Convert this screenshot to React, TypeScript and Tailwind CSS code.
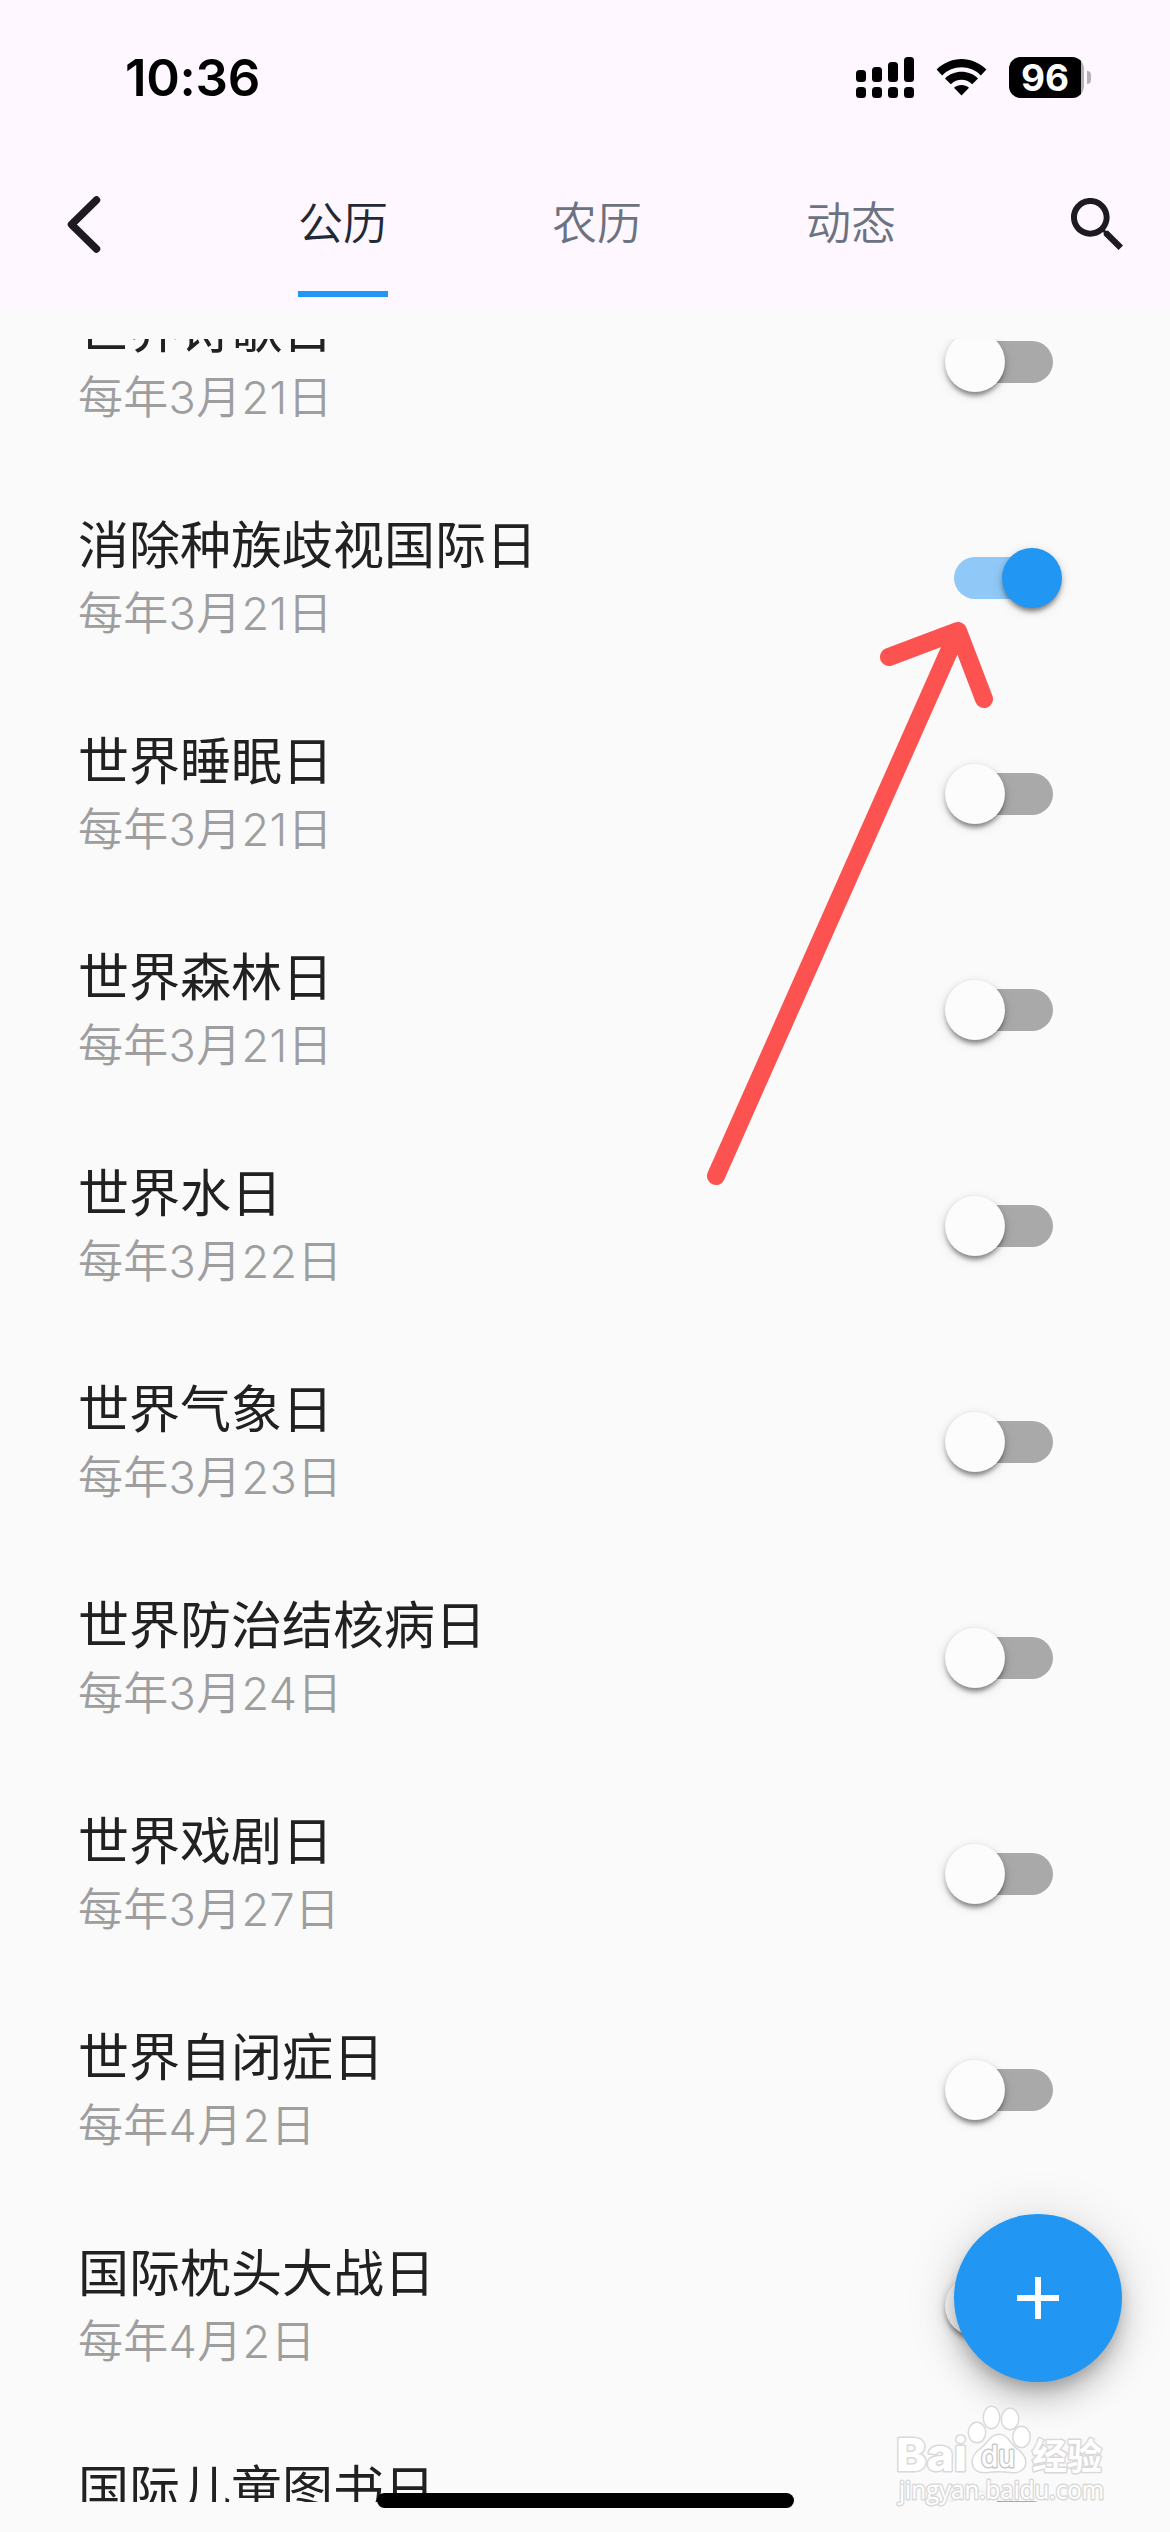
import { useState } from "react";

const HOLIDAYS = [
  { name: "世界诗歌日", date: "每年3月21日", enabled: false },
  { name: "消除种族歧视国际日", date: "每年3月21日", enabled: true },
  { name: "世界睡眠日", date: "每年3月21日", enabled: false },
  { name: "世界森林日", date: "每年3月21日", enabled: false },
  { name: "世界水日", date: "每年3月22日", enabled: false },
  { name: "世界气象日", date: "每年3月23日", enabled: false },
  { name: "世界防治结核病日", date: "每年3月24日", enabled: false },
  { name: "世界戏剧日", date: "每年3月27日", enabled: false },
  { name: "世界自闭症日", date: "每年4月2日", enabled: false },
  { name: "国际枕头大战日", date: "每年4月2日", enabled: false },
  { name: "国际儿童图书日", date: "每年4月2日", enabled: false },
];

const TABS = ["公历", "农历", "动态"];

function StatusBar() {
  return (
    <div className="flex h-[156px] items-start justify-between pt-[57px] pr-[79px] pl-[125px]">
      <span className="text-[51px] leading-[42px] font-semibold tracking-[-0.3px] text-black">10:36</span>
      <div className="flex items-start">
        <svg width="58" height="42" viewBox="0 0 58 42">
          <rect x="0" y="13" width="10" height="12" rx="3.5" />
          <rect x="16" y="10" width="10" height="15" rx="3.5" />
          <rect x="32" y="5" width="10" height="20" rx="3.5" />
          <rect x="48" y="0" width="10" height="25" rx="3.5" />
          <rect x="0" y="30" width="10" height="11" rx="3.5" />
          <rect x="16" y="30" width="10" height="11" rx="3.5" />
          <rect x="32" y="30" width="10" height="11" rx="3.5" />
          <rect x="48" y="30" width="10" height="11" rx="3.5" />
        </svg>
        <svg className="mt-0.5 ml-[22px]" width="51" height="37" viewBox="0 0 51 37">
          <path d="M0.600 10.600C14.500-3.500 36.500-3.500 50.400 10.600L44.800 16.400C34.500 5.600 16.500 5.600 6.200 16.400Z" />
          <path d="M9 19.400C18 10.600 33 10.600 42 19.400L36.200 25.200C30 19.400 21 19.400 14.800 25.200Z" />
          <path d="M18 28.800C22.300 25 28.700 25 33 28.800L25.500 36.600Z" />
        </svg>
        <div className="ml-[22px] flex h-[41px] w-[75px] overflow-hidden rounded-[12px] bg-[#b5b0b8]">
          <div className="flex h-full w-[72px] items-center justify-center bg-black text-[37px] leading-[41px] font-bold text-white">
            96
          </div>
        </div>
        <div className="mt-[14px] ml-[3px] h-[13px] w-1 rounded-r-full bg-[#b5b0b8]" />
      </div>
    </div>
  );
}

function Switch({ on, onToggle }: { on: boolean; onToggle: () => void }) {
  return (
    <button
      role="switch"
      aria-checked={on}
      onClick={onToggle}
      className={`flex h-[42px] w-[99px] items-center rounded-full ${
        on ? "justify-end bg-[#90c9f7]" : "justify-start bg-[#a9a9a9]"
      }`}
    >
      <span
        className={`h-[60px] w-[60px] shrink-0 rounded-full shadow-[0_6px_5px_-3px_rgba(0,0,0,0.3),0_3px_5px_rgba(0,0,0,0.2),0_3px_12px_rgba(0,0,0,0.14)] ${
          on ? "-mr-[9px] bg-[#2196f3]" : "-ml-[9px] bg-[#fcfcfc]"
        }`}
      />
    </button>
  );
}

function Watermark() {
  return (
    <svg className="absolute top-[2395px] left-[890px]" width="220" height="120" viewBox="0 0 220 120">
      <g fill="#fff" stroke="#d9d9d9" strokeWidth="3" paintOrder="stroke" strokeLinejoin="round">
        <ellipse cx="87" cy="37.500" rx="8" ry="9.500" />
        <ellipse cx="101.500" cy="22.500" rx="7.500" ry="10.500" />
        <ellipse cx="120" cy="24" rx="8" ry="10" />
        <ellipse cx="131.500" cy="42" rx="8" ry="10" />
        <path d="M109 40C117 40 119 48 126 54C140 63 137 78 122 77Q109 75 96 77C80 78 79 62 91 54C98 49 101 40 109 40Z" />
        <text x="6" y="76" fontSize="45" fontWeight="800" textLength="71" lengthAdjust="spacingAndGlyphs">Bai</text>
        <text x="91" y="72" fontSize="30" fontWeight="500" stroke="#c9c9c9" textLength="34" lengthAdjust="spacingAndGlyphs">du</text>
        <text x="142" y="75" fontSize="36" fontWeight="700" textLength="70" lengthAdjust="spacingAndGlyphs">经验</text>
        <text x="9" y="104" fontSize="26" fontFamily="Open Sans, sans-serif" textLength="205" lengthAdjust="spacingAndGlyphs">jingyan.baidu.com</text>
      </g>
    </svg>
  );
}

export default function App() {
  const [tab, setTab] = useState(0);
  const [items, setItems] = useState(HOLIDAYS);

  const toggle = (index: number) =>
    setItems(items.map((item, i) => (i === index ? { ...item, enabled: !item.enabled } : item)));

  return (
    <div className="relative flex h-[2532px] w-[1170px] flex-col overflow-hidden bg-[#fafafa] font-['Inter','Noto_Sans_CJK_SC',sans-serif]">
      <header className="h-[309px] shrink-0 bg-[#fef7ff]">
        <StatusBar />
        <nav className="flex h-[141px] items-start pr-[47px] pl-[67px]">
          <button aria-label="返回" className="mt-10">
            <svg width="34" height="57" viewBox="0 0 34 57" fill="none" stroke="#1d1b20" strokeWidth="7.500" strokeLinecap="round" strokeLinejoin="round">
              <path d="M29.500 4L4.500 28.500L29.500 53" />
            </svg>
          </button>
          <div className="ml-[197px] flex flex-1 gap-[164px]">
            {TABS.map((label, i) => (
              <button
                key={label}
                onClick={() => setTab(i)}
                className={`flex h-[141px] w-[90px] flex-col items-center pt-[35px] text-[45px] leading-[66px] font-[350] whitespace-nowrap ${
                  i === tab ? "text-[#1f2937]" : "text-[#6b7280]"
                }`}
              >
                {label}
                {i === tab && <span className="mt-[34px] h-1.5 w-full bg-[#2196f3]" />}
              </button>
            ))}
          </div>
          <button aria-label="搜索" className="mt-[42px]">
            <svg width="52" height="52" viewBox="3 3 17.490 17.490" fill="#1d1b20">
              <path d="M15.500 14h-.79l-.28-.27C15.410 12.590 16 11.110 16 9.500 16 5.910 13.090 3 9.500 3S3 5.910 3 9.500 5.910 16 9.500 16c1.610 0 3.090-.59 4.230-1.570l.27.28v.79l5 4.990L20.490 19l-4.990-5zm-6 0C7.010 14 5 11.990 5 9.500S7.010 5 9.500 5 14 7.010 14 9.500 11.990 14 9.500 14z" />
            </svg>
          </button>
        </nav>
      </header>

      {/* List viewport, the first and last rows are cut by its edges */}
      <main className="mt-[30px] flex h-[2163px] shrink-0 flex-col overflow-hidden">
        <ul className="-mt-[85px] shrink-0">
          {items.map((item, i) => (
            <li key={item.name} className="flex h-[216px] items-center justify-between pr-[117px] pl-[78px]">
              <div className="whitespace-nowrap">
                <p className="text-[51px] leading-[72px] text-[#212121]">{item.name}</p>
                <p className="text-[45px] leading-[64px] font-[350] tracking-[0.3px] text-[#9e9e9e]">{item.date}</p>
              </div>
              <Switch on={item.enabled} onToggle={() => toggle(i)} />
            </li>
          ))}
        </ul>
      </main>

      <button
        aria-label="添加"
        className="absolute top-[2214px] left-[954px] flex h-[168px] w-[168px] items-center justify-center rounded-full bg-[#2196f3] shadow-[0_9px_15px_-3px_rgba(0,0,0,0.2),0_18px_30px_rgba(0,0,0,0.17),0_3px_54px_rgba(0,0,0,0.12)]"
      >
        <svg width="42" height="42" viewBox="0 0 42 42" stroke="#fff" strokeWidth="6">
          <path d="M21 0V42M0 21H42" />
        </svg>
      </button>

      <svg
        className="pointer-events-none absolute top-[600px] left-[690px]"
        width="320"
        height="600"
        viewBox="690 600 320 600"
        fill="none"
        stroke="#fc5250"
        strokeWidth="18"
        strokeLinecap="round"
        strokeLinejoin="round"
      >
        <path d="M716 1176L958 631M889 657L958 631L984 699" />
      </svg>

      <Watermark />
      <div className="absolute top-[2493px] left-[377px] h-[15px] w-[417px] rounded-full bg-black" />
    </div>
  );
}
